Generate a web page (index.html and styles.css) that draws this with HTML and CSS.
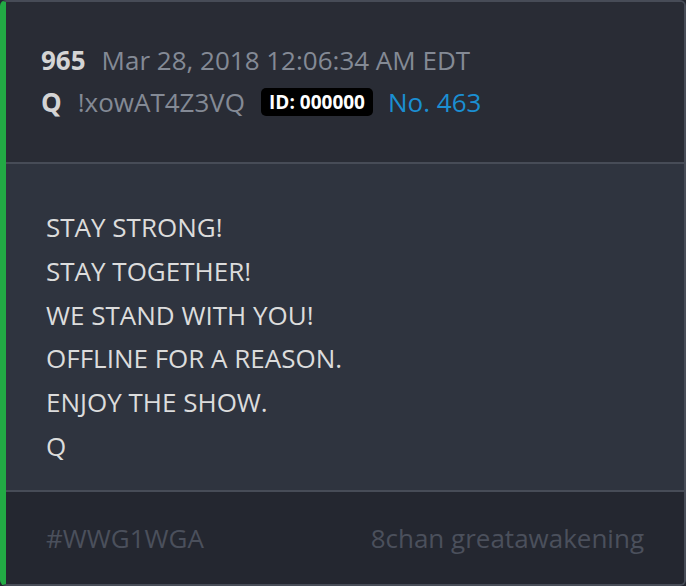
FILE: index.html
```html
<!DOCTYPE html>
<html lang="en">
<head>
  <meta charset="UTF-8" />
  <title>Q Post 965</title>
  <link rel="stylesheet" href="styles.css">
</head>
<body>
  <div class="post">
    <!-- Header -->
    <div class="post-header">
      <div class="meta-line">
        <span class="post-num">965</span>
        <span class="post-date">Mar 28, 2018 12:06:34 AM EDT</span>
      </div>
      <div class="meta-line">
        <span class="author">Q</span>
        <span class="tripcode">!xowAT4Z3VQ</span>
        <span class="id-badge">ID: 000000</span>
        <a href="#" class="post-link">No. 463</a>
      </div>
    </div>

    <!-- Body -->
    <div class="post-body">
      <p>STAY STRONG!</p>
      <p>STAY TOGETHER!</p>
      <p>WE STAND WITH YOU!</p>
      <p>OFFLINE FOR A REASON.</p>
      <p>ENJOY THE SHOW.</p>
      <p>Q</p>
    </div>

    <!-- Footer -->
    <div class="post-footer">
      <span>#WWG1WGA</span>
      <span>8chan greatawakening</span>
    </div>
  </div>
</body>
</html>
```

FILE: styles.css
```css
html, body {
  margin: 0;
  height: 100%;
}

body {
  font-family: 'Open Sans', 'Liberation Sans', sans-serif;
  font-size: 26px;
  background-color: #242730;
}

.post {
  box-sizing: border-box;
  height: 100vh;
  display: flex;
  flex-direction: column;
  border: 2px solid #474c57;
  border-left: 6px solid #22aa44;
  border-radius: 6px;
  overflow: hidden;
}

.post-header {
  background: #292c35;
  padding: 37px 35px 39px;
  border-bottom: 2px solid #474c57;
}

.meta-line {
  display: flex;
  align-items: center;
  line-height: 42px;
}

.post-num,
.author {
  font-weight: bold;
  color: #d4d4d4;
  margin-right: 16px;
}

.post-date,
.tripcode {
  color: #848a95;
}

.tripcode {
  margin-right: 16px;
}

.id-badge {
  background: #000;
  color: #fff;
  font-weight: bold;
  font-size: 19px;
  line-height: 28px;
  padding: 0 8px;
  border-radius: 5px;
  margin-right: 15px;
}

.post-link {
  color: #1b8fd2;
  text-decoration: none;
}

.post-body {
  flex-grow: 1;
  background: #2f343f;
  padding: 42px 40px 19px;
  border-bottom: 2px solid #474c57;
  color: #dcdcdc;
}

.post-body p {
  margin: 0;
  line-height: 43.8px;
}

.post-footer {
  background: #242730;
  padding: 24px 40px;
  display: flex;
  justify-content: space-between;
  line-height: 44px;
  color: #4b505c;
}
```
